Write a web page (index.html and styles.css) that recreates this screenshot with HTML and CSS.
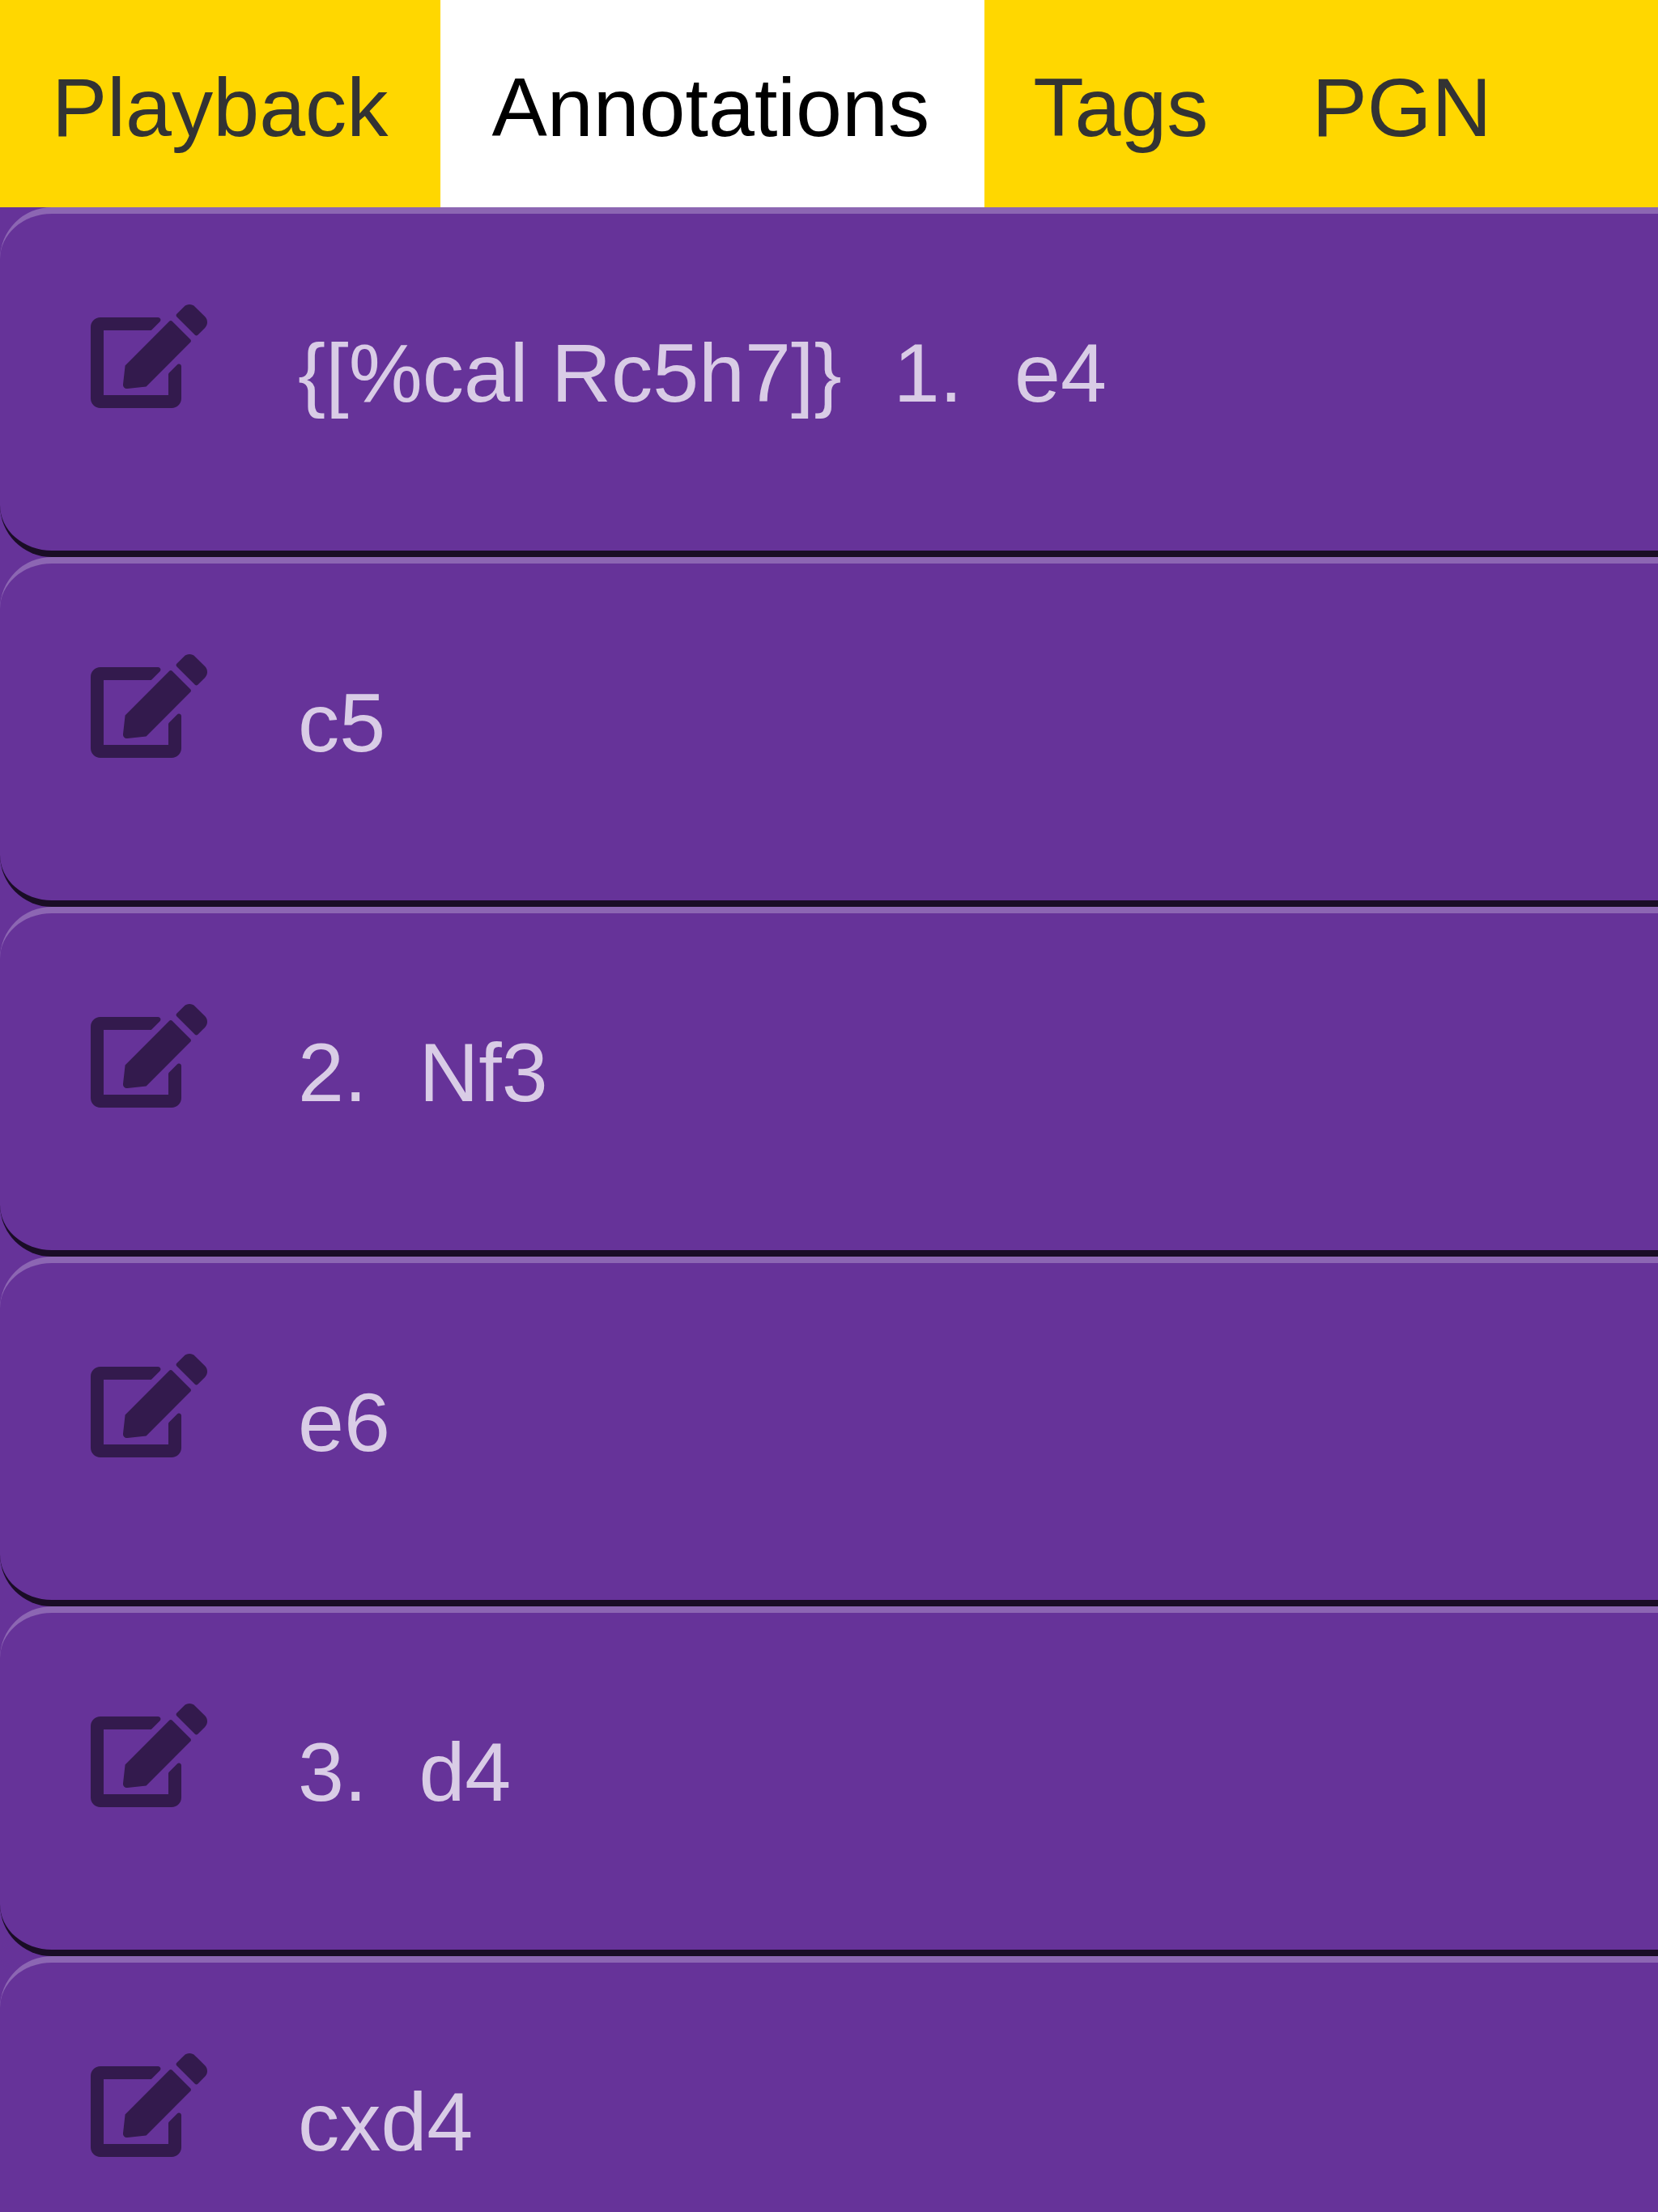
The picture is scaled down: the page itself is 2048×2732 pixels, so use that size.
FILE: index.html
```html
<!DOCTYPE html>
<html lang="en">
<head>
<meta charset="utf-8">
<title>Annotations</title>
<link rel="stylesheet" href="styles.css">
</head>
<body>
<svg class="sprite" aria-hidden="true">
<symbol id="edit" viewBox="0 0 576 512"><path d="M402.6 83.2l90.2 90.2c3.8 3.8 3.8 10 0 13.8L274.4 405.6l-92.8 10.3c-12.4 1.4-22.9-9.1-21.5-21.5l10.3-92.8L388.8 83.2c3.8-3.8 10-3.8 13.8 0zm162-22.9l-48.8-48.8c-15.2-15.2-39.9-15.2-55.2 0l-35.4 35.4c-3.8 3.8-3.8 10 0 13.8l90.2 90.2c3.8 3.8 10 3.8 13.8 0l35.4-35.4c15.2-15.3 15.2-40 0-55.2zM384 346.2V448H64V128h229.8c3.2 0 6.2-1.3 8.5-3.5l40-40c7.6-7.6 2.2-20.5-10.7-20.5H48C21.5 64 0 85.5 0 112v352c0 26.5 21.5 48 48 48h352c26.5 0 48-21.5 48-48V306.2c0-10.7-12.9-16-20.5-8.5l-40 40c-2.2 2.3-3.5 5.3-3.5 8.5z"/></symbol>
</svg>
<nav class="tabs">
<a class="tab">Playback</a>
<a class="tab active">Annotations</a>
<a class="tab">Tags</a>
<a class="tab">PGN</a>
</nav>
<main class="moves">
<div class="row"><svg class="icon"><use href="#edit"/></svg><span class="text"><span>{[%cal Rc5h7]}</span><span>1.</span><span>e4</span></span></div>
<div class="row"><svg class="icon"><use href="#edit"/></svg><span class="text"><span>c5</span></span></div>
<div class="row"><svg class="icon"><use href="#edit"/></svg><span class="text"><span>2.</span><span>Nf3</span></span></div>
<div class="row"><svg class="icon"><use href="#edit"/></svg><span class="text"><span>e6</span></span></div>
<div class="row"><svg class="icon"><use href="#edit"/></svg><span class="text"><span>3.</span><span>d4</span></span></div>
<div class="row"><svg class="icon"><use href="#edit"/></svg><span class="text"><span>cxd4</span></span></div>
</main>
</body>
</html>
```
FILE: styles.css
```css
* { box-sizing: border-box; }
body {
  margin: 0;
  height: 2732px;
  overflow: hidden;
  background: #663399;
  font-family: "Liberation Sans", Arial, sans-serif;
  font-size: 102.4px;
  line-height: 120px;
}
.sprite { display: none; }
.tabs {
  display: flex;
  height: 256px;
  background: #ffd700;
}
.tab {
  flex: none;
  padding: 73px 64px 0;
  color: #333;
}
.tab:first-child { width: 544px; }
.tab.active {
  width: 672px;
  margin-right: -3.8px;
  padding-left: 63.4px;
  background: #fff;
  color: #000;
}
.row {
  display: flex;
  align-items: flex-start;
  height: 432px;
  padding: 112px 0 0 112px;
  border-top: 8px solid #8c66b3;
  border-bottom: 8px solid #1a0d26;
  border-radius: 64px 0 0 64px;
  color: #d9cce6;
}
.icon {
  width: 144px;
  height: 128px;
  fill: #331a4d;
}
.text {
  display: flex;
  gap: 64px;
  margin: 25px 0 0 112px;
  white-space: pre;
}
```
